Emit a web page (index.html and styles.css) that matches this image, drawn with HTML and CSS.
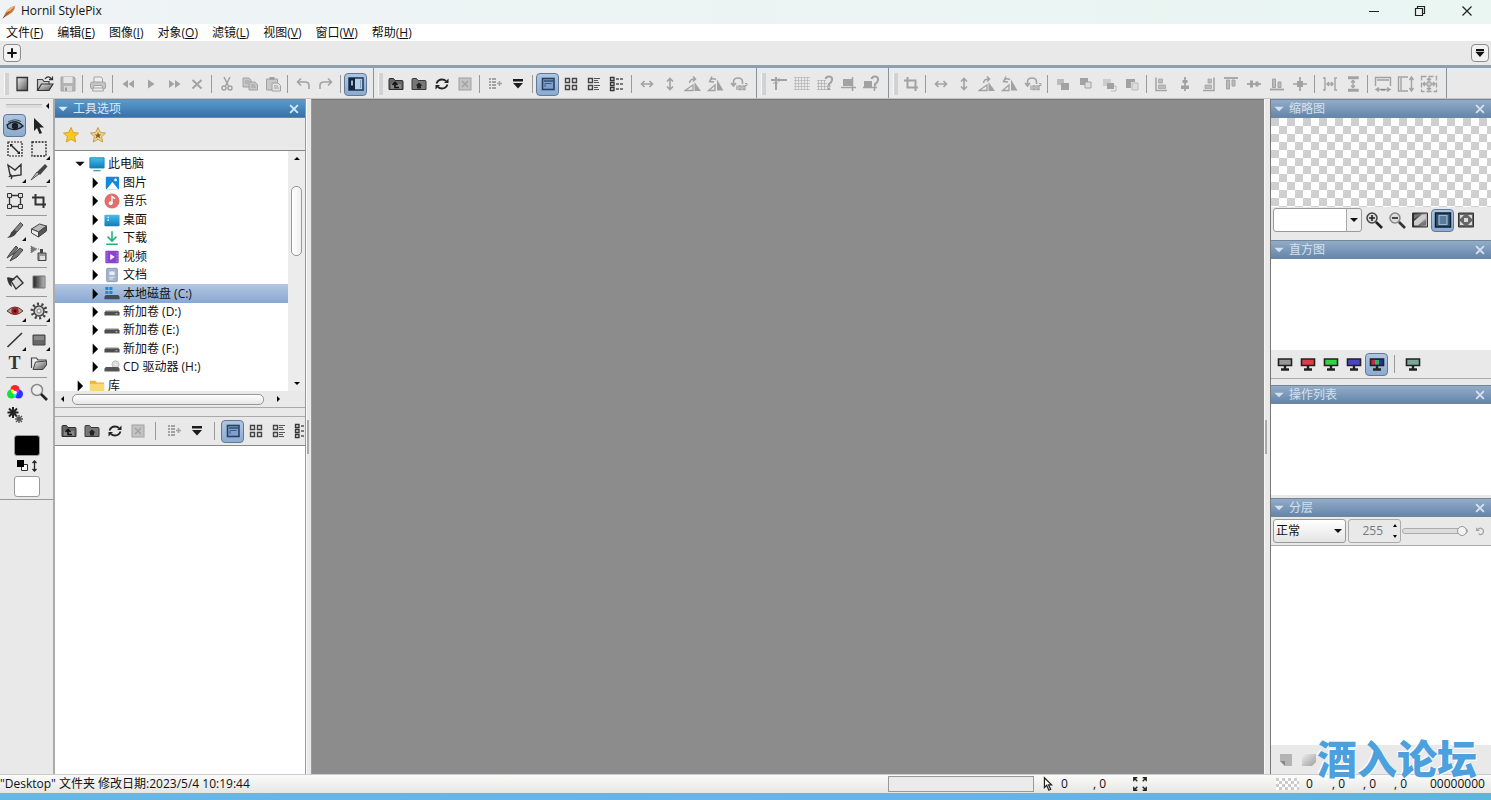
FILE: index.html
```html
<!DOCTYPE html>
<html lang="zh-CN">
<head>
<meta charset="utf-8">
<title>Hornil StylePix</title>
<link rel="stylesheet" href="styles.css">
</head>
<body>
<svg class="sprite" aria-hidden="true">
<defs>
<linearGradient id="gm" x1="0" y1="0" x2="1" y2="1"><stop offset="0" stop-color="#eee"/><stop offset="1" stop-color="#555"/></linearGradient>
<linearGradient id="gd" x1="0" y1="0" x2="1" y2="0"><stop offset="0" stop-color="#222"/><stop offset="1" stop-color="#bbb"/></linearGradient>
<linearGradient id="gb" x1="0" y1="0" x2="0" y2="1"><stop offset="0" stop-color="#43c0ee"/><stop offset="1" stop-color="#1579b8"/></linearGradient>
</defs>
<symbol id="new" viewBox="0 0 18 18"><path d="M4 2.500h10.500v13H4z" fill="url(#gm)" stroke="#333" stroke-width="1.300"/></symbol>
<symbol id="open" viewBox="0 0 18 18"><path d="M1.500 15V4.500h5l1.500 2h5V9" fill="#ccc" stroke="#444" stroke-width="1.200"/><path d="M1.500 15.500 5.500 9H17l-4 6.500z" fill="url(#gm)" stroke="#333" stroke-width="1.200"/><path d="M9 4c2-3 5-2.500 6.500 0M13 4.500h3.500V1.500" fill="none" stroke="#333" stroke-width="1.300"/></symbol>
<symbol id="save" viewBox="0 0 18 18"><path d="M2 2h13l1 1v13H2z" fill="#b4b4b4" stroke="#a5a5a5"/><path d="M4.500 2h9v6h-9z" fill="#e6e6e6"/><path d="M5 11h8v5H5z" fill="#d7d7d7"/><path d="M6 12.500h2V16H6z" fill="#999"/></symbol>
<symbol id="print" viewBox="0 0 18 18"><path d="M5 7V2h7l1.500 1.500V7" fill="#eee" stroke="currentColor"/><rect x="1.500" y="7" width="15" height="7" rx="2" fill="#c4c4c4" stroke="currentColor"/><path d="M5 10.500h8l1.500 5.500H3.500z" fill="#eee" stroke="currentColor"/><path d="M5 13h8" stroke="currentColor"/></symbol>
<symbol id="rew" viewBox="0 0 18 18"><path d="M9 5v8L3.500 9zM15 5v8L9.500 9z" fill="currentColor"/></symbol>
<symbol id="play" viewBox="0 0 18 18"><path d="M6 4.500v9L12.500 9z" fill="currentColor"/></symbol>
<symbol id="ff" viewBox="0 0 18 18"><path d="M4 5v8L9.500 9zM10 5v8l5.500-4z" fill="currentColor"/></symbol>
<symbol id="x" viewBox="0 0 18 18"><path d="m4.500 5 9 8.500M13.500 5l-9 8.500" stroke="currentColor" stroke-width="2"/></symbol>
<symbol id="cut" viewBox="0 0 18 18"><path d="m6 2 4.500 9M12 2 7.500 11" stroke="currentColor" stroke-width="1.500"/><circle cx="6" cy="13" r="2" fill="none" stroke="currentColor" stroke-width="1.500"/><circle cx="12" cy="13" r="2" fill="none" stroke="currentColor" stroke-width="1.500"/></symbol>
<symbol id="copy" viewBox="0 0 18 18"><path d="M2 3h6l2 2v7H2z" fill="#c6c6c6" stroke="currentColor"/><path d="M8 7h6l2.500 2.500V15H8z" fill="#c6c6c6" stroke="currentColor"/><path d="M4 6h4M4 8h3M10 10h4M10 12h5" stroke="currentColor"/></symbol>
<symbol id="paste" viewBox="0 0 18 18"><path d="M2.500 4h11v11h-11z" fill="#c8c8c8" stroke="currentColor"/><path d="M5.500 2h5v3h-5z" fill="currentColor"/><path d="M8 8h6l2.500 2.500V16H8z" fill="#e2e2e2" stroke="currentColor"/><path d="M10 11h4M10 13h5" stroke="currentColor"/></symbol>
<symbol id="undo" viewBox="0 0 18 18"><path d="M3.500 7H11q4 0 4 3.500V14M7 3.500 3.500 7 7 10.500" fill="none" stroke="currentColor" stroke-width="1.600"/></symbol>
<symbol id="redo" viewBox="0 0 18 18"><path d="M14.500 7H7q-4 0-4 3.500V14M11 3.500 14.500 7 11 10.500" fill="none" stroke="currentColor" stroke-width="1.600"/></symbol>
<symbol id="panel" viewBox="0 0 18 18"><rect x="2" y="3" width="14" height="12" fill="#b9d0ea" stroke="#1c3454" stroke-width="1.500"/><path d="M2 3h6v12H2z" fill="#14253c"/><path d="M4 5.500h2v5H4z" fill="#9db8d6"/><path d="M13.500 5v8" stroke="#7f9dc2"/></symbol>
<symbol id="fup" viewBox="0 0 18 18"><path d="M2 14.500V4.500q0-1 1-1h3.500l1.500 2h7q1 0 1 1v8z" fill="#666" stroke="#2e2e2e"/><path d="M4 9h10v4.500H4z" fill="#888"/><path d="M12 12.500H8V8M5.500 10 8 7.500l2.500 2.500" fill="none" stroke="#111" stroke-width="1.600"/></symbol>
<symbol id="fhome" viewBox="0 0 18 18"><path d="M2 14.500V4.500q0-1 1-1h3.500l1.500 2h7q1 0 1 1v8z" fill="#777" stroke="#3a3a3a"/><path d="m5.500 10.500 3.500-3 3.500 3H11v3H7v-3z" fill="#222"/></symbol>
<symbol id="refresh" viewBox="0 0 18 18"><path d="M3.500 8.500Q5 4.500 9 4.500q2.500 0 4 1.500M14.500 9.500q-1.500 4-5.500 4-2.500 0-4-1.500" fill="none" stroke="#222" stroke-width="1.800"/><path d="M15.500 3.500V8H11zM2.500 14.500V10H7z" fill="#222"/></symbol>
<symbol id="delbox" viewBox="0 0 18 18"><rect x="3" y="3" width="12" height="12" fill="#c3c3c3" stroke="currentColor"/><path d="m6 6 6 6M12 6l-6 6" stroke="currentColor" stroke-width="1.500"/></symbol>
<symbol id="ladd" viewBox="0 0 18 18"><path d="M3 4h2M3 7h2M3 10h2M3 13h2M6 4h4M6 7h4M6 10h4M6 13h4" stroke="currentColor" stroke-width="2"/><path d="M11 8.500h5M13.500 6v5" stroke="currentColor" stroke-width="1.500"/></symbol>
<symbol id="drop" viewBox="0 0 18 18"><path d="M4 4h10v2.500H4zM4 8h10l-5 5.500z" fill="#1c1c1c"/></symbol>
<symbol id="v1" viewBox="0 0 18 18"><rect x="3.500" y="3.500" width="11.500" height="11" fill="#7fa0ca" stroke="#273f63" stroke-width="1.600"/><path d="M5 6h9" stroke="#314d75" stroke-width="1.500"/><path d="M6 12V8.500h6.500" fill="none" stroke="#3d5c89"/></symbol>
<symbol id="v2" viewBox="0 0 18 18"><path d="M3.500 3.500h4v4h-4zM10.500 3.500h4v4h-4zM3.500 10.500h4v4h-4zM10.500 10.500h4v4h-4z" fill="none" stroke="#444" stroke-width="1.400"/></symbol>
<symbol id="v3" viewBox="0 0 18 18"><path d="M3.500 3.500h4v4h-4zM3.500 10.500h4v4h-4z" fill="none" stroke="#444" stroke-width="1.400"/><path d="M9 3.500h6M9 5.500h4M9 7.500h5M9 10.500h6M9 12.500h4M9 14.500h5" stroke="#555"/></symbol>
<symbol id="v4" viewBox="0 0 18 18"><path d="M2.500 2.500H6v3H2.500zM2.500 7.500H6v3H2.500zM2.500 12.500H6v3H2.500z" fill="none" stroke="#333" stroke-width="1.300"/><path d="M8 4h8M8 9h8M8 14h8" stroke="#555" stroke-width="1.400" stroke-dasharray="3 1"/></symbol>
<symbol id="fh" viewBox="0 0 18 18"><path d="M4 9h10M6.500 6 3.500 9l3 3M11.500 6l3 3-3 3" fill="none" stroke="currentColor" stroke-width="1.600"/></symbol>
<symbol id="fv" viewBox="0 0 18 18"><path d="M9 4v10M6 6.500l3-3 3 3M6 11.500l3 3 3-3" fill="none" stroke="currentColor" stroke-width="1.600"/></symbol>
<symbol id="rl" viewBox="0 0 18 18"><path d="M1 15.500 9 10v5.500z" fill="none" stroke="currentColor" stroke-width="1.300"/><path d="M10.500 7v9H17z" fill="currentColor"/><path d="M5.500 8Q6 3.500 11.500 4M9 1.500 11.500 4 9 6.500" fill="none" stroke="currentColor" stroke-width="1.500"/></symbol>
<symbol id="rr" viewBox="0 0 18 18"><path d="M10 4.500v11h6.500z" fill="currentColor"/><path d="M8 10v5.500H1.500z" fill="none" stroke="currentColor" stroke-width="1.300"/><path d="M2.500 6.500Q4 2.500 9 4.500M5 1.500 2.500 6.500l4.500.5" fill="none" stroke="currentColor" stroke-width="1.500"/></symbol>
<symbol id="r180" viewBox="0 0 18 18"><path d="M3.500 10V7q0-4 4.500-4t4.500 4v2M1 8l2.500 3L6 8" fill="none" stroke="currentColor" stroke-width="1.600"/><path d="M7 10.500v4.500M9 11h2v3.500H9zM13 11h2v3.500h-2z" fill="none" stroke="currentColor" stroke-width="1.300"/><path d="M15 8.500h2v2h-2" fill="none" stroke="currentColor"/></symbol>
<symbol id="guide" viewBox="0 0 18 18"><path d="M1 5h16M6 2v13" stroke="currentColor" stroke-width="2"/><path d="M3 8h5M9 3v4" stroke="currentColor"/></symbol>
<symbol id="grid" viewBox="0 0 18 18"><path d="M1 2.500h16M1 5.500h16M1 8.500h16M1 11.500h16M1 14.500h16M2.500 2v13M5.500 2v13M8.500 2v13M11.500 2v13M14.500 2v13" stroke="currentColor" stroke-width=".5"/></symbol>
<symbol id="gridq" viewBox="0 0 18 18"><path d="M1 5.500h9M1 8.500h10M1 11.500h14M1 14.500h14M2.500 5v10M5.500 5v10M8.500 5v10M11.500 10v5" stroke="currentColor" stroke-width=".6"/><path d="M9.500 4q1-3 4-2.500T16 5t-3 4v2M13 12.500V15" fill="none" stroke="currentColor" stroke-width="2"/></symbol>
<symbol id="snap" viewBox="0 0 18 18"><path d="M4 4h9v7H4z" fill="currentColor"/><path d="M13.500 2v14M2 12.500h15" stroke="currentColor" stroke-width="1.500"/></symbol>
<symbol id="snapq" viewBox="0 0 18 18"><path d="M2 6h8v6H2z" fill="currentColor"/><path d="M1 12.500h14M12.500 11v5" stroke="currentColor" stroke-width="1.500"/><path d="M9.500 4q1-3 4-2.500T16 5t-3 4v2" fill="none" stroke="currentColor" stroke-width="2"/></symbol>
<symbol id="crop" viewBox="0 0 18 18"><path d="M2 5.500h11.500V16M5.500 2v10.500H16" fill="none" stroke="currentColor" stroke-width="2"/></symbol>
<symbol id="o1" viewBox="0 0 18 18"><path d="M3 4h7v6H3z" fill="#bbb"/><path d="M7 8h8v7H7z" fill="currentColor"/></symbol>
<symbol id="o2" viewBox="0 0 18 18"><path d="M3 3h8v7H3z" fill="currentColor"/><path d="M8 7h6v6H8z" fill="#ddd" stroke="currentColor"/></symbol>
<symbol id="o3" viewBox="0 0 18 18"><path d="M3 4h8v7H3z" fill="#ccc"/><path d="M7 8h7v6H7z" fill="currentColor"/><path d="M14 11h2v5h-5" fill="none" stroke="#bbb"/></symbol>
<symbol id="o4" viewBox="0 0 18 18"><path d="M3 4h9v3H8v6H3z" fill="currentColor"/><path d="M9 8h6v7H9z" fill="#ddd" stroke="#bbb"/></symbol>
<symbol id="al" viewBox="0 0 18 18"><path d="M3 2.500v13h11" fill="none" stroke="currentColor" stroke-width="1.500"/><path d="M5.500 4h4v4h-4zM5.500 10h7v3.500h-7z" fill="#bbb" stroke="currentColor" stroke-width=".7"/></symbol>
<symbol id="ac" viewBox="0 0 18 18"><path d="M9 2v14" stroke="currentColor" stroke-width="1.800"/><path d="M6.500 5h5v3h-5zM5 10.500h8V14H5z" fill="currentColor"/></symbol>
<symbol id="ar" viewBox="0 0 18 18"><path d="M15 2.500v13H4" fill="none" stroke="currentColor" stroke-width="1.500"/><path d="M9 4h3.500v4H9zM6 10h6.500v3.500H6z" fill="#bbb" stroke="currentColor" stroke-width=".7"/></symbol>
<symbol id="at" viewBox="0 0 18 18"><path d="M2 3h14" stroke="currentColor" stroke-width="1.800"/><path d="M4.500 5h3v9h-3zM10 5h3v6h-3z" fill="#bbb" stroke="currentColor"/></symbol>
<symbol id="am" viewBox="0 0 18 18"><path d="M2 9h14" stroke="currentColor" stroke-width="1.800"/><path d="M5 5.500h3v7H5zM10.500 6.500h3v5h-3z" fill="currentColor"/></symbol>
<symbol id="ab" viewBox="0 0 18 18"><path d="M2 14.500h14" stroke="currentColor" stroke-width="1.800"/><path d="M4.500 4h3v8.500h-3zM10 7h3v5.500h-3z" fill="#bbb" stroke="currentColor"/></symbol>
<symbol id="amc" viewBox="0 0 18 18"><path d="M2 9h14M9 2v14" stroke="currentColor" stroke-width="1.700"/><path d="M6 6h6v6H6z" fill="currentColor"/></symbol>
<symbol id="dh" viewBox="0 0 18 18"><path d="M2 3h2v12H2M16 3h-2v12h2M6 9h6M8 7 6 9l2 2M10 7l2 2-2 2" fill="none" stroke="currentColor" stroke-width="1.400"/></symbol>
<symbol id="dv" viewBox="0 0 18 18"><path d="M4 2h10v1.500H4M4 16h10v-1.500H4M9 5.500v7M7 7.500l2-2 2 2M7 10.500l2 2 2-2" fill="none" stroke="currentColor" stroke-width="1.400"/></symbol>
<symbol id="sw" viewBox="0 0 18 18"><path d="M1.500 11V2.500h15V11M3 5h12" fill="none" stroke="currentColor" stroke-width="1.400"/><path d="M2 14.500h14M5 12.500l-3 2 3 2M13 12.500l3 2-3 2" fill="none" stroke="currentColor" stroke-width="1.400"/><path d="M7 14h4v1.500H7z" fill="#888"/></symbol>
<symbol id="sh" viewBox="0 0 18 18"><path d="M11 2H1.500v14H11M4 3v12" fill="none" stroke="currentColor" stroke-width="1.400"/><path d="M14.500 3v12M12.500 5l2-3 2 3M12.500 13l2 3 2-3" fill="none" stroke="currentColor" stroke-width="1.400"/></symbol>
<symbol id="sb" viewBox="0 0 18 18"><path d="M1.500 1.500h15v15h-15z" fill="none" stroke="currentColor" stroke-width="1.300" stroke-dasharray="5 2"/><path d="M3 9h12M9 3v12M7 5l2-2 2 2M7 13l2 2 2-2M5 7 3 9l2 2M13 7l2 2-2 2" fill="none" stroke="currentColor" stroke-width="1.400"/><path d="M7 7h4v4H7z" fill="#ccc" stroke="currentColor"/></symbol>
<symbol id="eye" viewBox="0 0 18 18"><path d="M1 8q8-7 16 1-7 6-15 2z" fill="#8093a8" stroke="#222" stroke-width="1.300"/><circle cx="9" cy="9" r="3.200" fill="#10202e"/><path d="M2 5q7-4 13-.5" fill="none" stroke="#35475a"/></symbol>
<symbol id="arrow" viewBox="0 0 18 18"><path d="M4 1v13l3-3 2.500 6 2.500-1-2.500-5.500H14z" fill="#222"/></symbol>
<symbol id="sel1" viewBox="0 0 18 18"><path d="M2 2h14v14H2z" fill="none" stroke="#222" stroke-width="1.200" stroke-dasharray="2 1"/><path d="m5 5 8 8" stroke="#222" stroke-width="1.500"/><path d="M4 4h3L4 7zM14 14h-3l3-3z" fill="#222"/></symbol>
<symbol id="sel2" viewBox="0 0 18 18"><path d="M2 2h14v14H2z" fill="none" stroke="#222" stroke-width="1.300" stroke-dasharray="2 1.200"/></symbol>
<symbol id="lasso" viewBox="0 0 18 18"><path d="M5 16q2-3-1-4.500L2 2l7 5 6-5.500V12l-8 1q-3-1-4 1" fill="none" stroke="#333" stroke-width="1.400"/></symbol>
<symbol id="wand" viewBox="0 0 18 18"><path d="m1 17 6-8 2 2z" fill="#bbb" stroke="#555"/><path d="m7 9 8-8 2.500 2.500L10 12z" fill="#444"/></symbol>
<symbol id="trans" viewBox="0 0 18 18"><path d="M3.500 3.500h11v11h-11z" fill="none" stroke="#333" stroke-width="1.300"/><path d="M1.500 1.500h4v4h-4zM12.500 1.500h4v4h-4zM1.500 12.500h4v4h-4zM12.500 12.500h4v4h-4z" fill="#ddd" stroke="#333"/></symbol>
<symbol id="brush" viewBox="0 0 18 18"><path d="m8 9 6.500-7.500L17 4l-6 7z" fill="#888" stroke="#444"/><path d="M1 16.500q3-1 4-5l3-3L11 11.500q-4 6-10 5z" fill="#444"/></symbol>
<symbol id="eraser" viewBox="0 0 18 18"><path d="m1.500 8 8-5 7 2-8 6z" fill="#bbb" stroke="#444"/><path d="m1.500 8 7 3v5l-7-4z" fill="#eee" stroke="#444"/><path d="m8.500 11 8-6v5l-8 6z" fill="#555" stroke="#444"/></symbol>
<symbol id="brush2" viewBox="0 0 18 18"><path d="m1 14 4-6 5-6 2 2-5 6zM4 17l4-7 6-6 3 2-6 7z" fill="#777" stroke="#444"/></symbol>
<symbol id="spray" viewBox="0 0 18 18"><path d="M8 9h8v7.500H8z" fill="#999" stroke="#444"/><path d="M10 5h3v4h-3z" fill="#444"/><path d="M1 2v7l6-4zM8 5h2" fill="#777" stroke="#777" stroke-dasharray="1 1"/><path d="M10 12h5v4h-5z" fill="#ddd"/></symbol>
<symbol id="bucket" viewBox="0 0 18 18"><path d="m5 8 6-5 6 7-7 6z" fill="#ddd" stroke="#333" stroke-width="1.400"/><path d="M1 5q0-2 8 1l-4 3 1 5q-4-2-5-9z" fill="#333"/></symbol>
<symbol id="gradi" viewBox="0 0 18 18"><path d="M3 3h12v12H3z" fill="url(#gd)" stroke="#777"/></symbol>
<symbol id="redeye" viewBox="0 0 18 18"><path d="M1 9q8-8 16 0-8 7-16 0z" fill="#b9a1a1" stroke="#633"/><circle cx="9" cy="9" r="3.700" fill="#a22327"/><circle cx="9" cy="9" r="1.500" fill="#311"/></symbol>
<symbol id="gear" viewBox="0 0 18 18"><circle cx="9" cy="9" r="7" fill="none" stroke="#444" stroke-width="3" stroke-dasharray="2 2.400"/><circle cx="9" cy="9" r="5" fill="#ccc" stroke="#444" stroke-width="1.500"/><circle cx="9" cy="9" r="2" fill="#eee" stroke="#888"/></symbol>
<symbol id="line" viewBox="0 0 18 18"><path d="M1.500 16 16 2" stroke="#333" stroke-width="1.600"/></symbol>
<symbol id="rect" viewBox="0 0 18 18"><path d="M3 4h12v10H3z" fill="#666" stroke="#444"/><path d="M4 5h10v4H4z" fill="#888"/></symbol>
<symbol id="folder2" viewBox="0 0 18 18"><path d="M1.500 14V4h5l1.500 2h8v3" fill="#eee" stroke="#444" stroke-width="1.200"/><path d="M3 15.500 5.500 8l11-1v4L13 15.500z" fill="url(#gm)" stroke="#444"/></symbol>
<symbol id="rgb" viewBox="0 0 18 18"><circle cx="9" cy="6.500" r="4.500" fill="#f22"/><circle cx="5.500" cy="11" r="4.500" fill="#17e03c"/><circle cx="12.500" cy="11" r="4.500" fill="#2834ff"/><path d="M5 7q2-2 4 2l-1 2q-3-1-3-4z" fill="#ffee20"/><path d="M13 7q-2-2-4 2l1 2q3-1 3-4z" fill="#f024e8"/><path d="M7 11h4l-2 4z" fill="#20e6f0"/><circle cx="9" cy="9.500" r="1.800" fill="#fff"/></symbol>
<symbol id="mag" viewBox="0 0 18 18"><circle cx="7" cy="7" r="5.500" fill="#eee" stroke="#888" stroke-width="1.500"/><path d="m11 11 6 6" stroke="#222" stroke-width="2.600"/></symbol>
<symbol id="flake" viewBox="0 0 18 18"><path d="M7 1v11M1.500 6.500h11M3 2.500l8 8M11 2.500l-8 8" stroke="#222" stroke-width="2"/><path d="M13 9v8M9 13h8M10 10l6 6M16 10l-6 6" stroke="#555" stroke-width="1.400"/></symbol>
<symbol id="zin" viewBox="0 0 18 18"><circle cx="7" cy="7" r="5" fill="#ddd" stroke="#444" stroke-width="1.500"/><path d="m11 11 6 6" stroke="#222" stroke-width="2.600"/><path d="M4 7h6M7 4v6" stroke="#222" stroke-width="1.600"/></symbol>
<symbol id="zout" viewBox="0 0 18 18"><circle cx="7" cy="7" r="5" fill="#ddd" stroke="#888" stroke-width="1.500"/><path d="m11 11 6 6" stroke="#333" stroke-width="2.600"/><path d="M4 7h6" stroke="#222" stroke-width="1.600"/></symbol>
<symbol id="z1" viewBox="0 0 18 18"><path d="M1.500 2h15v14h-15z" fill="url(#gd)" stroke="#333"/><path d="M3 8V3.500h6zM15 9v5.500H9z" fill="#777"/><path d="M3 14.500V10l8-6.500h4V7l-8 7.500z" fill="#ccc"/></symbol>
<symbol id="z2" viewBox="0 0 18 18"><path d="M1.500 2h15v14h-15z" fill="#33536f" stroke="#0c2138" stroke-width="1.500"/><path d="M5 4.500h8v9H5z" fill="#5b7c9c" stroke="#9fb9d2" stroke-width="1.200"/></symbol>
<symbol id="z3" viewBox="0 0 18 18"><path d="M1.500 2h15v14h-15z" fill="#666" stroke="#333"/><path d="M3 4h4L3 8zM15 4h-4l4 4zM3 14h4l-4-4zM15 14h-4l4-4zM7 7h4v4H7z" fill="#ddd"/></symbol>
<symbol id="mon" viewBox="0 0 18 18"><path d="M2.500 4h13v6.500h-13z" fill="currentColor" stroke="#222" stroke-width="1.600"/><path d="M9 11v3M5 14.500h8" stroke="#222" stroke-width="2.400"/></symbol>
<symbol id="monc" viewBox="0 0 18 18"><path d="M2.500 4h13v6.500h-13z" fill="#2530a0" stroke="#222" stroke-width="1.600"/><path d="M3.500 5H7v4.500H3.500z" fill="#c6283c"/><path d="M7 5h4v4.500H7z" fill="#28b766"/><path d="M9 11v3M5 14.500h8" stroke="#222" stroke-width="2.400"/></symbol>
<symbol id="tri" viewBox="0 0 18 18"><path d="M6 2v14l7-7z" fill="#000"/></symbol>
<symbol id="trid" viewBox="0 0 18 18"><path d="M3 6h12l-6 6z" fill="currentColor"/></symbol>
<symbol id="close" viewBox="0 0 18 18"><path d="m4 4 10 10M14 4 4 14" stroke="currentColor" stroke-width="2.400"/></symbol>
<symbol id="star" viewBox="0 0 18 18"><path d="m9 1.500 2.300 5 5.200.6-3.900 3.600 1.100 5.300L9 13.300 4.300 16l1.100-5.300L1.500 7.100l5.200-.6z" fill="#fdc81c" stroke="#d8a030"/></symbol>
<symbol id="star2" viewBox="0 0 18 18"><path d="m9 1.500 2.300 5 5.200.6-3.900 3.600 1.100 5.300L9 13.300 4.300 16l1.100-5.300L1.500 7.100l5.200-.6z" fill="#f2d88a" stroke="#c49c50"/><path d="m9 6 1 2.500h2.500L10.500 10l1 2.500L9 11l-2.500 1.500 1-2.500-2-1.500H8z" fill="#8c5a2c"/></symbol>
<symbol id="pc" viewBox="0 0 18 18"><path d="M1 2h16v11.500H1z" fill="url(#gb)" stroke="#1688ae"/><path d="M5 16.500h8" stroke="#4a94b2" stroke-width="1.500"/></symbol>
<symbol id="pic" viewBox="0 0 18 18"><rect x="2" y="2" width="15" height="14" rx="1" fill="#1588dd"/><path d="M3 16 9.500 8l6.500 8z" fill="#fff"/><circle cx="13" cy="5.500" r="1.500" fill="#fff"/></symbol>
<symbol id="music" viewBox="0 0 18 18"><circle cx="9" cy="9" r="8.500" fill="#e0706c"/><circle cx="7.500" cy="11.500" r="2.200" fill="#fff"/><path d="M9 11.500V4l3.500 2.500" fill="none" stroke="#fff" stroke-width="1.500"/></symbol>
<symbol id="desk" viewBox="0 0 18 18"><rect x="0.500" y="3" width="17" height="13" rx="1" fill="url(#gb)"/><path d="M4 6h1.500M4 9h1.500" stroke="#fff" stroke-width="1.500"/></symbol>
<symbol id="down" viewBox="0 0 18 18"><path d="M9 1.500V12M4 7.500l5 5 5-5M2.500 16h13" fill="none" stroke="#20b37d" stroke-width="1.800"/></symbol>
<symbol id="video" viewBox="0 0 18 18"><rect x="1.500" y="2" width="15" height="14" rx="1" fill="#8941d0"/><path d="M7 5.500v7l5-3.500z" fill="#fff"/><path d="M3.500 4v11M14.500 4v11" stroke="#c59cf0" stroke-dasharray="1.500 1.500"/></symbol>
<symbol id="doc" viewBox="0 0 18 18"><rect x="3" y="1.500" width="12" height="15" rx="1" fill="#a4b4cc" stroke="#8496b2"/><path d="M6 5h6v4H6z" fill="#e8eef8"/><path d="M6 11.500h6M6 13.500h4" stroke="#e8eef8"/></symbol>
<symbol id="disk" viewBox="0 0 18 18"><path d="M2 7.500h14l1.500 2v3.500H.5V9.500z" fill="#4e4e4e"/><path d="M1.500 8h15" stroke="#aaa"/><path d="M13 11h2" stroke="#ddd"/></symbol>
<symbol id="sysdisk" viewBox="0 0 18 18"><path d="M2 10h14l1.500 2v3H.5v-3z" fill="#3e4c5c"/><path d="M1.500 1h3.500v3.500H1.500zM6 1h3.500v3.500H6zM1.500 5.500h3.500V9H1.500zM6 5.500h3.500V9H6z" fill="#158cdd"/></symbol>
<symbol id="cd" viewBox="0 0 18 18"><circle cx="13" cy="6" r="4" fill="#ddd" stroke="#bbb"/><circle cx="13" cy="6" r="1" fill="#fff"/><path d="M2 9h14l1.500 2v3H.5v-3z" fill="#555"/></symbol>
<symbol id="lib" viewBox="0 0 18 18"><path d="M1 3h6l2 2h8v11H1z" fill="#e9b53c"/><path d="M1 6.500h16V16H1z" fill="#fbd873"/></symbol>
<symbol id="expand" viewBox="0 0 18 18"><path d="M2 6V2h4M12 2h4v4M2 12v4h4M12 16h4v-4M2 2l4 4M16 2l-4 4M2 16l4-4M16 16l-4-4" fill="none" stroke="#222" stroke-width="1.500"/></symbol>
<symbol id="cursor" viewBox="0 0 18 18"><path d="M5 2v11l2.500-2.500L10 16l2-1-2.500-5H13z" fill="#fff" stroke="#222" stroke-width="1.400"/></symbol>
<symbol id="page" viewBox="0 0 18 18"><path d="M3 3h12v12H8l-5-5z" fill="#b4b4b4"/><path d="M3 10h5v5z" fill="#888"/></symbol>
<symbol id="page2" viewBox="0 0 18 18"><path d="M6 3h10v8l-4 4H2V7z" fill="url(#gm)" opacity=".5"/></symbol>
<symbol id="swap" viewBox="0 0 24 14"><path d="M6.500 5.500h6v6h-6z" fill="#fff" stroke="#333"/><path d="M2 1h7v7H2z" fill="#000"/><path d="M19.500 2v10M17.500 4l2-2 2 2M17.500 10l2 2 2-2" fill="none" stroke="#222" stroke-width="1.300"/></symbol>
</svg>

<div class="app">
<header class="title">
  <svg class="logo" viewBox="0 0 18 18"><path d="m1 17 4-8q5-7 12-8-1 8-9 12z" fill="#c77a3c"/><path d="M1 17 13 5" stroke="#7b3c18"/><path d="M5 9q5-7 12-8l-7 7z" fill="#e9b98d"/></svg>
  <h1>Hornil StylePix</h1>
  <div class="winbtns">
    <button aria-label="最小化"><svg viewBox="0 0 18 18"><path d="M4 9.500h10" stroke="#222"/></svg></button>
    <button aria-label="还原"><svg viewBox="0 0 18 18"><path d="M4.500 6.500h7v7h-7zM6.500 6V4.500h7v7H12" fill="none" stroke="#222" stroke-width="1.200"/></svg></button>
    <button aria-label="关闭"><svg viewBox="0 0 18 18"><path d="m4.500 4.500 9 9M13.500 4.500l-9 9" stroke="#222" stroke-width="1.200"/></svg></button>
  </div>
</header>
<nav class="menu">
  <button>文件(<u>F</u>)</button><button>编辑(<u>E</u>)</button><button>图像(<u>I</u>)</button><button>对象(<u>O</u>)</button><button>滤镜(<u>L</u>)</button><button>视图(<u>V</u>)</button><button>窗口(<u>W</u>)</button><button>帮助(<u>H</u>)</button>
</nav>
<div class="tabs">
  <button class="tabbtn" aria-label="新建标签"><svg viewBox="0 0 18 18"><path d="M9 2v14M2 9h14" stroke="#111" stroke-width="3"/></svg></button>
  <button class="tabbtn" aria-label="标签列表"><svg viewBox="0 0 18 18"><path d="M3 3h12v3H3zM2 7h14l-7 8z" fill="#111"/></svg></button>
</div>
<div class="bars">
  <div class="bar">
    <button class="tb" aria-label="新建"><svg><use href="#new"/></svg></button><button class="tb" aria-label="打开"><svg><use href="#open"/></svg></button><button class="tb" disabled aria-label="保存"><svg><use href="#save"/></svg></button><i class="sep"></i>
    <button class="tb" disabled aria-label="打印"><svg><use href="#print"/></svg></button><i class="sep"></i>
    <button class="tb" disabled aria-label="后退"><svg><use href="#rew"/></svg></button><button class="tb" disabled aria-label="播放"><svg><use href="#play"/></svg></button><button class="tb" disabled aria-label="前进"><svg><use href="#ff"/></svg></button><button class="tb" disabled aria-label="删除"><svg><use href="#x"/></svg></button><i class="sep"></i>
    <button class="tb" disabled aria-label="剪切"><svg><use href="#cut"/></svg></button><button class="tb" disabled aria-label="复制"><svg><use href="#copy"/></svg></button><button class="tb" disabled aria-label="粘贴"><svg><use href="#paste"/></svg></button><i class="sep"></i>
    <button class="tb" disabled aria-label="撤销"><svg><use href="#undo"/></svg></button><button class="tb" disabled aria-label="重做"><svg><use href="#redo"/></svg></button><i class="sep"></i>
    <button class="tb on" aria-label="面板"><svg><use href="#panel"/></svg></button>
  </div>
  <div class="bar">
    <button class="tb" aria-label="上级文件夹"><svg><use href="#fup"/></svg></button><button class="tb" aria-label="主文件夹"><svg><use href="#fhome"/></svg></button><button class="tb" aria-label="刷新"><svg><use href="#refresh"/></svg></button><button class="tb" disabled aria-label="删除文件"><svg><use href="#delbox"/></svg></button><i class="sep"></i>
    <button class="tb" disabled aria-label="添加"><svg><use href="#ladd"/></svg></button><button class="tb" aria-label="更多"><svg><use href="#drop"/></svg></button><i class="sep"></i>
    <button class="tb on" aria-label="大图"><svg><use href="#v1"/></svg></button><button class="tb" aria-label="网格"><svg><use href="#v2"/></svg></button><button class="tb" aria-label="平铺"><svg><use href="#v3"/></svg></button><button class="tb" aria-label="列表"><svg><use href="#v4"/></svg></button><i class="sep"></i>
    <button class="tb" disabled aria-label="水平翻转"><svg><use href="#fh"/></svg></button><button class="tb" disabled aria-label="垂直翻转"><svg><use href="#fv"/></svg></button><button class="tb" disabled aria-label="向左旋转"><svg><use href="#rl"/></svg></button><button class="tb" disabled aria-label="向右旋转"><svg><use href="#rr"/></svg></button><button class="tb" disabled aria-label="旋转半圈"><svg><use href="#r180"/></svg></button>
  </div>
  <div class="bar">
    <button class="tb" disabled aria-label="参考线"><svg><use href="#guide"/></svg></button><button class="tb" disabled aria-label="网格线"><svg><use href="#grid"/></svg></button><button class="tb" disabled aria-label="网格设置"><svg><use href="#gridq"/></svg></button><button class="tb" disabled aria-label="对齐"><svg><use href="#snap"/></svg></button><button class="tb" disabled aria-label="对齐设置"><svg><use href="#snapq"/></svg></button>
  </div>
  <div class="bar">
    <button class="tb" disabled aria-label="裁剪"><svg><use href="#crop"/></svg></button><i class="sep"></i>
    <button class="tb" disabled aria-label="水平翻转对象"><svg><use href="#fh"/></svg></button><button class="tb" disabled aria-label="垂直翻转对象"><svg><use href="#fv"/></svg></button><button class="tb" disabled aria-label="左转对象"><svg><use href="#rl"/></svg></button><button class="tb" disabled aria-label="右转对象"><svg><use href="#rr"/></svg></button><button class="tb" disabled aria-label="对象旋转半圈"><svg><use href="#r180"/></svg></button><i class="sep"></i>
    <button class="tb" disabled aria-label="置顶"><svg><use href="#o1"/></svg></button><button class="tb" disabled aria-label="上移"><svg><use href="#o2"/></svg></button><button class="tb" disabled aria-label="下移"><svg><use href="#o3"/></svg></button><button class="tb" disabled aria-label="置底"><svg><use href="#o4"/></svg></button><i class="sep"></i>
    <button class="tb" disabled aria-label="左对齐"><svg><use href="#al"/></svg></button><button class="tb" disabled aria-label="水平居中"><svg><use href="#ac"/></svg></button><button class="tb" disabled aria-label="右对齐"><svg><use href="#ar"/></svg></button><button class="tb" disabled aria-label="顶对齐"><svg><use href="#at"/></svg></button><button class="tb" disabled aria-label="垂直居中"><svg><use href="#am"/></svg></button><button class="tb" disabled aria-label="底对齐"><svg><use href="#ab"/></svg></button><button class="tb" disabled aria-label="居中"><svg><use href="#amc"/></svg></button><i class="sep"></i>
    <button class="tb" disabled aria-label="水平分布"><svg><use href="#dh"/></svg></button><button class="tb" disabled aria-label="垂直分布"><svg><use href="#dv"/></svg></button><i class="sep"></i>
    <button class="tb" disabled aria-label="等宽"><svg><use href="#sw"/></svg></button><button class="tb" disabled aria-label="等高"><svg><use href="#sh"/></svg></button><button class="tb" disabled aria-label="等大小"><svg><use href="#sb"/></svg></button>
  </div>
</div>
<main class="main">
  <aside class="tools">
    <div class="toolbox">
      <div class="grip"><svg viewBox="0 0 6 8"><path d="M5 0v8L1 4z"/></svg></div>
      <div class="pair"><button class="tb on" aria-label="浏览"><svg><use href="#eye"/></svg></button><button class="tb" aria-label="选择"><svg><use href="#arrow"/></svg></button></div>
      <div class="pair"><button class="tb" aria-label="选区变换"><svg><use href="#sel1"/></svg></button><button class="tb more" aria-label="矩形选区"><svg><use href="#sel2"/></svg></button></div>
      <div class="pair"><button class="tb more" aria-label="套索"><svg><use href="#lasso"/></svg></button><button class="tb more" aria-label="魔棒"><svg><use href="#wand"/></svg></button></div>
      <hr>
      <div class="pair"><button class="tb" aria-label="变换"><svg><use href="#trans"/></svg></button><button class="tb" aria-label="裁剪工具"><svg><use href="#crop"/></svg></button></div>
      <hr>
      <div class="pair"><button class="tb more" aria-label="画笔"><svg><use href="#brush"/></svg></button><button class="tb" aria-label="橡皮擦"><svg><use href="#eraser"/></svg></button></div>
      <div class="pair"><button class="tb" aria-label="克隆"><svg><use href="#brush2"/></svg></button><button class="tb" aria-label="喷枪"><svg><use href="#spray"/></svg></button></div>
      <hr>
      <div class="pair"><button class="tb" aria-label="填充"><svg><use href="#bucket"/></svg></button><button class="tb" aria-label="渐变"><svg><use href="#gradi"/></svg></button></div>
      <hr>
      <div class="pair"><button class="tb more" aria-label="红眼"><svg><use href="#redeye"/></svg></button><button class="tb more" aria-label="调整"><svg><use href="#gear"/></svg></button></div>
      <hr>
      <div class="pair"><button class="tb more" aria-label="直线"><svg><use href="#line"/></svg></button><button class="tb more" aria-label="矩形"><svg><use href="#rect"/></svg></button></div>
      <div class="pair"><button class="tb letter">T</button><button class="tb" aria-label="素材"><svg><use href="#folder2"/></svg></button></div>
      <hr>
      <div class="pair"><button class="tb" aria-label="颜色"><svg><use href="#rgb"/></svg></button><button class="tb" aria-label="缩放"><svg><use href="#mag"/></svg></button></div>
      <div class="pair"><button class="tb" aria-label="效果"><svg><use href="#flake"/></svg></button></div>
      <div class="swatches"><button class="swatch black" aria-label="前景色"></button><button class="swap" aria-label="交换颜色"><svg><use href="#swap"/></svg></button><button class="swatch" aria-label="背景色"></button></div>
    </div>
  </aside>
  <section class="left">
    <h2 class="head active"><svg><use href="#trid"/></svg><span>工具选项</span><button aria-label="关闭工具选项"><svg><use href="#close"/></svg></button></h2>
    <div class="fav"><button class="tb" aria-label="收藏"><svg><use href="#star"/></svg></button><button class="tb" aria-label="添加收藏"><svg><use href="#star2"/></svg></button></div>
    <div class="treewrap">
      <ul class="tree">
        <li class="root"><svg><use href="#trid"/></svg><svg><use href="#pc"/></svg>此电脑</li>
        <li><svg><use href="#tri"/></svg><svg><use href="#pic"/></svg>图片</li>
        <li><svg><use href="#tri"/></svg><svg><use href="#music"/></svg>音乐</li>
        <li><svg><use href="#tri"/></svg><svg><use href="#desk"/></svg>桌面</li>
        <li><svg><use href="#tri"/></svg><svg><use href="#down"/></svg>下载</li>
        <li><svg><use href="#tri"/></svg><svg><use href="#video"/></svg>视频</li>
        <li><svg><use href="#tri"/></svg><svg><use href="#doc"/></svg>文档</li>
        <li class="picked"><svg><use href="#tri"/></svg><svg><use href="#sysdisk"/></svg>本地磁盘 (C:)</li>
        <li><svg><use href="#tri"/></svg><svg><use href="#disk"/></svg>新加卷 (D:)</li>
        <li><svg><use href="#tri"/></svg><svg><use href="#disk"/></svg>新加卷 (E:)</li>
        <li><svg><use href="#tri"/></svg><svg><use href="#disk"/></svg>新加卷 (F:)</li>
        <li><svg><use href="#tri"/></svg><svg><use href="#cd"/></svg>CD 驱动器 (H:)</li>
        <li class="root"><svg><use href="#tri"/></svg><svg><use href="#lib"/></svg>库</li>
      </ul>
      <div class="vscroll"><svg viewBox="0 0 8 6"><path d="M1 4h6L4 1z"/></svg><i></i><b></b><svg viewBox="0 0 8 6"><path d="M1 2h6L4 5z"/></svg></div>
    </div>
    <div class="hscroll"><svg viewBox="0 0 6 8"><path d="M5 1v6L2 4z"/></svg><i></i><svg viewBox="0 0 6 8"><path d="M1 1v6l3-3z"/></svg></div>
    <div class="browse">
      <button class="tb" aria-label="上级"><svg><use href="#fup"/></svg></button><button class="tb" aria-label="主页"><svg><use href="#fhome"/></svg></button><button class="tb" aria-label="重新载入"><svg><use href="#refresh"/></svg></button><button class="tb" disabled aria-label="移除"><svg><use href="#delbox"/></svg></button><i class="sep wide"></i>
      <button class="tb" disabled aria-label="加入列表"><svg><use href="#ladd"/></svg></button><button class="tb" aria-label="选项"><svg><use href="#drop"/></svg></button><i class="sep wide"></i>
      <button class="tb on" aria-label="大图标"><svg><use href="#v1"/></svg></button><button class="tb" aria-label="小图标"><svg><use href="#v2"/></svg></button><button class="tb" aria-label="详细信息"><svg><use href="#v3"/></svg></button><button class="tb" aria-label="列表视图"><svg><use href="#v4"/></svg></button>
    </div>
    <div class="files"></div>
  </section>
  <div class="split"><i></i></div>
  <section class="canvas"></section>
  <div class="split thin"><i></i></div>
  <aside class="right">
    <section>
      <h2 class="head"><svg><use href="#trid"/></svg><span>缩略图</span><button aria-label="关闭缩略图"><svg><use href="#close"/></svg></button></h2>
      <div class="checker"></div>
      <div class="row zoom">
        <label class="combo"><select aria-label="缩放比例"><option></option></select><svg><use href="#trid"/></svg></label>
        <button class="tb" aria-label="放大"><svg><use href="#zin"/></svg></button><button class="tb" aria-label="缩小"><svg><use href="#zout"/></svg></button><button class="tb" aria-label="实际大小"><svg><use href="#z1"/></svg></button><button class="tb on" aria-label="适合窗口"><svg><use href="#z2"/></svg></button><button class="tb" aria-label="全屏"><svg><use href="#z3"/></svg></button>
      </div>
    </section>
    <section class="histogram">
      <h2 class="head"><svg><use href="#trid"/></svg><span>直方图</span><button aria-label="关闭直方图"><svg><use href="#close"/></svg></button></h2>
      <div class="blank"></div>
      <div class="row lined">
        <button class="tb gray" aria-label="亮度"><svg><use href="#mon"/></svg></button><button class="tb red" aria-label="红"><svg><use href="#mon"/></svg></button><button class="tb green" aria-label="绿"><svg><use href="#mon"/></svg></button><button class="tb blue" aria-label="蓝"><svg><use href="#mon"/></svg></button><button class="tb on" aria-label="全部通道"><svg><use href="#monc"/></svg></button><i class="sep wide"></i><button class="tb teal" aria-label="统计"><svg><use href="#mon"/></svg></button>
      </div>
    </section>
    <section>
      <h2 class="head"><svg><use href="#trid"/></svg><span>操作列表</span><button aria-label="关闭操作列表"><svg><use href="#close"/></svg></button></h2>
      <div class="blank"></div>
    </section>
    <section class="layers">
      <h2 class="head"><svg><use href="#trid"/></svg><span>分层</span><button aria-label="关闭分层"><svg><use href="#close"/></svg></button></h2>
      <div class="row lined">
        <label class="combo mode"><select aria-label="混合模式"><option>正常</option></select><svg><use href="#trid"/></svg></label>
        <label class="spin"><input type="text" value="255" disabled aria-label="不透明度"><svg viewBox="0 0 8 18"><path d="M2 5h4L4 2zM2 13h4l-2 3z"/></svg></label>
        <input class="slider" type="range" min="0" max="255" value="255" aria-label="不透明度滑块">
        <button class="tb small" disabled aria-label="重置"><svg viewBox="0 0 18 18"><path d="M4 4v4h4M4.500 8Q8 3 12 5.500T13 13q-3 3-6 0" fill="none" stroke="currentColor" stroke-width="1.800"/></svg></button>
      </div>
      <div class="list"></div>
      <div class="row foot"><button class="tb" disabled aria-label="新建图层"><svg><use href="#page"/></svg></button><button class="tb" disabled aria-label="复制图层"><svg><use href="#page2"/></svg></button></div>
    </section>
  </aside>
</main>
<footer class="status">
  <span class="info">"Desktop" 文件夹 修改日期:2023/5/4 10:19:44</span>
  <div class="mid"><div class="progress"></div><svg><use href="#cursor"/></svg><span class="n">0</span><span class="n">, 0</span><svg><use href="#expand"/></svg></div>
  <div class="end"><i class="mini"></i><span class="n first">0</span><span class="n">, 0</span><span class="n">, 0</span><span class="n last">, 0</span><span>00000000</span></div>
</footer>
<div class="strip"></div>
<div class="mark">酒入论坛</div>
</div>
</body>
</html>
```
FILE: styles.css
```css
* { box-sizing: border-box; }
body { margin: 0; font: 12px/16px "Open Sans", "Noto Sans CJK SC", sans-serif; color: #111; }
button { border: 0; padding: 0; background: none; font: inherit; color: inherit; }
h1, h2, ul { margin: 0; padding: 0; font-size: 12px; font-weight: 400; list-style: none; }
svg { width: 18px; height: 18px; flex: none; display: block; }
.sprite { position: absolute; width: 0; height: 0; }
.app { position: relative; display: flex; flex-direction: column; height: 100vh; overflow: hidden; background: #e9e9e9; }

.title { display: flex; align-items: center; height: 24px; padding-left: 2px; background: linear-gradient(90deg, #eff3f5, #e9f6f2); }
.logo { width: 14px; height: 14px; }
.title h1 { flex: 1; padding: 0 0 2px 5px; }
.winbtns { display: flex; }
.winbtns button { width: 46px; height: 24px; display: grid; place-items: center; padding-bottom: 2px; }
.winbtns button:last-child { width: 48px; }
.menu { display: flex; gap: 14px; height: 17px; padding-left: 6px; background: #fff; }
.menu button { line-height: 16px; white-space: nowrap; }
.tabs { display: flex; justify-content: space-between; align-items: center; height: 24px; padding: 0 2px 0 3px; }
.tabbtn { width: 18px; height: 18px; display: grid; place-items: center; border: 1px solid #8c8c8c; border-radius: 4px; background: #f2f2f2; }
.tabbtn svg { width: 12px; height: 12px; }

.bars { display: flex; height: 34px; border-top: 3px solid #8e9fb0; border-bottom: 1px solid #c4c4c4; background: linear-gradient(#e4eef5, #e9e9e9 5px); }
.bar { display: flex; align-items: center; padding: 2px 6px 0 4px; border-right: 1px solid #8d9296; }
.bar::before { content: ""; width: 4px; height: 22px; margin-right: 1px; background: #d2d2d2; border-left: 1px solid #f8f8f8; }
.tb { flex: none; width: 23px; height: 23px; display: grid; place-items: center; color: #333; border-radius: 4px; }
.tb:disabled { color: #a2a2a2; }
.tb.on { border: 1px solid #60799a; background: linear-gradient(#afc6e2, #8cabd0); }
.sep { flex: none; width: 1px; height: 18px; margin: 0 3px; background: #9a9a9a; }
.sep.wide { margin: 0 6px; }

.main { flex: 1; display: flex; min-height: 0; }
.tools { width: 54px; flex: none; border-right: 1px solid #aaa; }
.toolbox { padding: 0 3px 1px; border-bottom: 1px solid #999; }
.grip { height: 15px; padding: 4px 0 0 3px; display: flex; align-items: flex-start; gap: 3px; justify-content: space-between; }
.grip::before { content: ""; width: 36px; height: 3px; margin-top: 1px; background: #ddd; border-top: 1px solid #bbb; }
.grip svg { width: 5px; height: 6px; }
.pair { display: flex; gap: 1px; }
.toolbox hr { height: 1px; margin: 3px 3px 2px; border: 0; background: #999; }
.more { position: relative; }
.more::after { content: ""; position: absolute; right: 0; bottom: 0; border: 2px solid #111; border-top-color: transparent; border-left-color: transparent; }
.letter { font: bold 18px/20px "Liberation Serif", serif; }
.swatches { display: flex; flex-direction: column; align-items: center; padding: 9px 0 1px; gap: 3px; }
.swatch { width: 26px; height: 21px; border: 1px solid #999; border-radius: 3px; background: #fff; }
.swatch.black { background: #000; }
.swap, .swap svg { width: 24px; height: 14px; display: block; }

.left { width: 252px; flex: none; display: flex; flex-direction: column; border-right: 1px solid #999; border-left: 1px solid #aaa; }
.head { display: flex; align-items: center; height: 19px; padding: 0 4px 0 1px; color: #d5e2ee; background: linear-gradient(#93acc8, #6486ab); border-top: 1px solid #70869c; border-bottom: 1px solid #70869c; }
.head svg { width: 14px; height: 14px; }
.head span { flex: 1; padding-left: 3px; }
.head.active { color: #d3eafc; background: linear-gradient(#5b9aca, #3771a9); }
.fav { display: flex; gap: 4px; height: 33px; padding: 5px 4px; border-bottom: 1px solid #888; }
.treewrap { display: flex; height: 240px; overflow: hidden; background: #fff; }
.tree { flex: 1; display: flex; flex-direction: column; height: 244px; padding-top: 4px; line-height: 12px; }
.tree li { flex: 1; display: flex; align-items: center; padding-left: 33px; white-space: nowrap; }
.tree .root { padding-left: 18px; }
.tree svg { width: 16px; height: 16px; }
.tree svg:first-child { width: 14px; height: 14px; margin-right: 2px; }
.tree svg:nth-child(2) { margin-right: 3px; }
.tree .picked { background: linear-gradient(#b3c7e2, #88a8d1); }
.vscroll { width: 17px; display: flex; flex-direction: column; align-items: center; padding: 5px 0; background: #ececec; }
.vscroll svg { width: 8px; height: 6px; }
.vscroll i { width: 11px; height: 70px; margin-top: 24px; border: 1px solid #999; border-radius: 5px; background: linear-gradient(90deg, #fff, #eee); }
.vscroll b { flex: 1; }
.hscroll { display: flex; align-items: center; height: 17px; padding: 0 23px 0 4px; border-bottom: 1px solid #aaa; }
.hscroll svg { width: 6px; height: 8px; }
.hscroll i { flex: 1; height: 11px; margin: 0 12px 0 7px; border: 1px solid #999; border-radius: 5px; background: linear-gradient(#fff, #e6e6e6); }
.browse { display: flex; align-items: center; height: 30px; margin-top: 8px; padding-left: 2px; overflow: hidden; border-top: 1px solid #aaa; border-bottom: 1px solid #888; }
.files { flex: 1; background: #fff; }
.split { width: 6px; flex: none; display: flex; align-items: center; border-left: 1px solid #f8f8f8; border-right: 1px solid #999; }
.split i { width: 2px; height: 34px; border: 1px solid #aaa; }
.split.thin { border-right: 0; }
.canvas { flex: 1; background: #8c8c8c; border-top: 1px solid #777; }

.right { width: 221px; flex: none; display: flex; flex-direction: column; gap: 3px; border-left: 1px solid #777; }
.checker { height: 89px; background: repeating-conic-gradient(#fff 0 25%, #d0d0d0 0 50%) 0 0 / 16px 16px; }
.row { display: flex; align-items: center; height: 29px; padding-left: 2px; }
.lined { border-bottom: 1px solid #aaa; }
.zoom { height: 30px; padding-bottom: 4px; }
.blank { height: 91px; background: #fff; }
.combo { position: relative; flex: none; width: 89px; height: 24px; }
.combo select { appearance: none; width: 100%; height: 24px; padding: 0 2px; border: 1px solid #999; border-radius: 3px; font: inherit; color: #111; background: linear-gradient(90deg, #fff 72px, #aaa 72px 73px, #eee 73px); }
.combo svg { position: absolute; right: 2px; top: 6px; width: 12px; height: 12px; pointer-events: none; }
.combo.mode { width: 73px; margin-right: 2px; }
.mode select { background: linear-gradient(#fff, #e4e4e4); }
.spin { display: flex; align-items: center; width: 53px; height: 24px; margin-right: 1px; border: 1px solid #aaa; border-radius: 3px; }
.spin input { width: 42px; padding: 0 8px 0 0; border: 0; background: none; font: inherit; color: #777; text-align: right; }
.spin svg { width: 8px; }
.slider { appearance: none; flex: 1; min-width: 0; height: 6px; margin: 0; border: 1px solid #aaa; border-radius: 3px; background: #ddd; }
.slider::-webkit-slider-thumb { appearance: none; width: 10px; height: 10px; border: 1px solid #999; border-radius: 50%; background: #f2f2f2; }
.small svg { width: 12px; height: 12px; }
.histogram { margin-bottom: 3px; }
.gray { color: #999; }
.red { color: #e03b4b; }
.green { color: #35d044; }
.blue { color: #4b44c8; }
.teal { color: #79a99c; }
.layers { flex: 1; display: flex; flex-direction: column; }
.list { flex: 1; background: #fff; }
.foot { padding-left: 3px; }

.status { display: flex; align-items: center; height: 19px; background: linear-gradient(#fbfbfb, #e6e6e3); border-top: 1px solid #ccc; }
.status .info { flex: 1; white-space: nowrap; }
.mid { display: flex; align-items: center; width: 388px; }
.mid svg { width: 16px; height: 16px; }
.progress { width: 146px; height: 16px; margin-right: 6px; border: 1px solid #999; background: #ebebeb; }
.n { flex: none; width: 31px; }
.n.first { width: 26px; }
.n.last { width: 36px; }
.mid svg + .n { width: 37px; padding-left: 5px; }
.mid .n + svg { margin-left: 8px; }
.end { display: flex; align-items: center; width: 215px; }
.mini { width: 23px; height: 12px; margin-right: 7px; background: repeating-conic-gradient(#fff 0 25%, #ccc 0 50%) 0 0 / 6px 6px; }
.strip { height: 7px; background: linear-gradient(90deg, #67b7e3, #69b2e8 60%, #5fb4dc); }
.mark { position: absolute; right: 14px; bottom: 25px; font: 900 40px/36px "Noto Sans CJK SC", sans-serif; color: #4ba0dd; text-shadow: 1px 1px #fff, -1px -1px #fff; }
```
